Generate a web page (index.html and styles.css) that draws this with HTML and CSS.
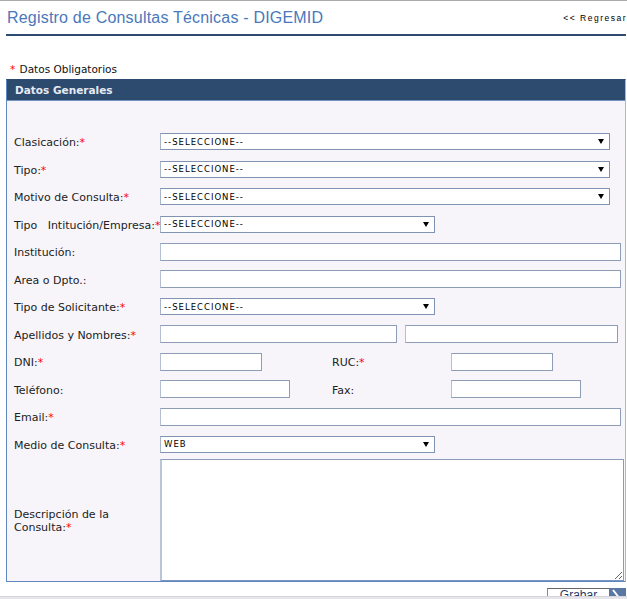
FILE: index.html
```html
<!DOCTYPE html>
<html lang="es">
<head>
<meta charset="utf-8">
<title>Registro de Consultas Técnicas - DIGEMID</title>
<link rel="stylesheet" href="styles.css">
</head>
<body>
<div class="topbar">
  <h1 class="title">Registro de Consultas Técnicas - DIGEMID</h1>
  <a class="back" href="#">&lt;&lt; Regresar</a>
</div>
<div class="note"><span class="star">*</span> Datos Obligatorios</div>
<form class="panel">
  <div class="panel-head">Datos Generales</div>
  <div class="panel-body">
    <div class="row">
      <label class="lbl">Clasicación:<span class="star">*</span></label>
      <span class="sel w-full"><select><option>--SELECCIONE--</option></select></span>
    </div>
    <div class="row">
      <label class="lbl">Tipo:<span class="star">*</span></label>
      <span class="sel w-full"><select><option>--SELECCIONE--</option></select></span>
    </div>
    <div class="row">
      <label class="lbl">Motivo de Consulta:<span class="star">*</span></label>
      <span class="sel w-full"><select><option>--SELECCIONE--</option></select></span>
    </div>
    <div class="row">
      <label class="lbl">Tipo&nbsp;&nbsp;&nbsp;Intitución/Empresa:<span class="star">*</span></label>
      <span class="sel w-half"><select><option>--SELECCIONE--</option></select></span>
    </div>
    <div class="row">
      <label class="lbl">Institución:</label>
      <input class="inp w-wide" type="text">
    </div>
    <div class="row">
      <label class="lbl">Area o Dpto.:</label>
      <input class="inp w-wide" type="text">
    </div>
    <div class="row">
      <label class="lbl">Tipo de Solicitante:<span class="star">*</span></label>
      <span class="sel w-half"><select><option>--SELECCIONE--</option></select></span>
    </div>
    <div class="row">
      <label class="lbl">Apellidos y Nombres:<span class="star">*</span></label>
      <input class="inp w-ape" type="text">
      <input class="inp w-nom" type="text">
    </div>
    <div class="row">
      <label class="lbl">DNI:<span class="star">*</span></label>
      <span class="cell"><input class="inp w-doc" type="text"></span>
      <label class="lbl2">RUC:<span class="star">*</span></label>
      <input class="inp w-doc" type="text">
    </div>
    <div class="row">
      <label class="lbl">Teléfono:</label>
      <span class="cell"><input class="inp w-tel" type="text"></span>
      <label class="lbl2">Fax:</label>
      <input class="inp w-tel" type="text">
    </div>
    <div class="row">
      <label class="lbl">Email:<span class="star">*</span></label>
      <input class="inp w-wide" type="text">
    </div>
    <div class="row">
      <label class="lbl">Medio de Consulta:<span class="star">*</span></label>
      <span class="sel w-half"><select><option>WEB</option></select></span>
    </div>
    <div class="row desc">
      <label class="lbl">Descripción de la Consulta:<span class="star">*</span></label>
      <textarea class="area"></textarea>
    </div>
  </div>
</form>
<div class="actions">
  <button class="btn" type="button">
    <span class="btn-text">Grabar</span>
    <span class="btn-icon"><svg width="17" height="12" viewBox="0 0 17 12"><line x1="4" y1="2" x2="9.5" y2="9" stroke="#fff" stroke-width="2"/></svg></span>
  </button>
</div>
<div class="strip"></div>
</body>
</html>
```
FILE: styles.css
```css
html { overflow: hidden; }
body {
  margin: 0;
  border-top: 1px solid #a9a9a9;
  background: #fff;
  font-family: "DejaVu Sans", Verdana, sans-serif;
  color: #222;
}
.topbar {
  margin: 0 1px 0 6px;
  height: 33px;
  border-bottom: 2px solid #2d4a70;
  display: flex;
  justify-content: space-between;
  align-items: flex-start;
}
.title {
  margin: 9px 0 0 1px;
  font: normal 16px/16px "Liberation Sans", Arial, sans-serif;
  letter-spacing: 0.2px;
  color: #4a78bb;
}
.back {
  margin: 12px -1px 0 0;
  font: 8.5px/10px "Liberation Sans", Arial, sans-serif;
  letter-spacing: 1.5px;
  color: #000;
  text-decoration: none;
}
.note {
  margin: 27px 0 0 10px;
  height: 13px;
  font-size: 10.5px;
  line-height: 13px;
  color: #111;
}
.note .star { margin-right: 1px; }
.star { color: #f00; }
.panel {
  display: block;
  margin: 3px 1px 0 6px;
  border: 1px solid #5f86bf;
  border-top-color: #2d4a6f;
  border-right-color: #a9b9d6;
  background: #f7f5fa;
}
.panel-head {
  height: 20px;
  line-height: 20px;
  padding-left: 8px;
  background: #2d4a6f;
  color: #e6ebf3;
  font-weight: bold;
  font-size: 10.5px;
  border-bottom: 1px solid #7393c2;
}
.panel-body {
  padding: 27px 0 0 7px;
}
.row {
  display: flex;
  align-items: center;
  height: 27.5px;
}
.lbl {
  width: 146px;
  flex: none;
  padding-top: 2px;
  font-size: 11px;
  line-height: 13px;
  color: #222;
}
.lbl2 {
  width: 119px;
  flex: none;
  padding-top: 2px;
  font-size: 11px;
  line-height: 13px;
  color: #222;
}
.cell { width: 172px; flex: none; }
.inp {
  display: block;
  box-sizing: border-box;
  height: 18px;
  margin: 0;
  padding: 0 3px;
  border: 1px solid #8d9db6;
  border-left-color: #b4c0d1;
  background: #fff;
  font: 11px "DejaVu Sans", sans-serif;
}
.w-wide { width: 461px; }
.w-ape { width: 237px; margin-right: 8px; }
.w-nom { width: 213px; }
.w-doc { width: 102px; }
.w-tel { width: 130px; }
.sel {
  position: relative;
  display: block;
  flex: none;
}
.sel select {
  display: block;
  box-sizing: border-box;
  width: 100%;
  height: 17px;
  margin: 0;
  padding: 0 0 0 3px;
  border: 1px solid #8093b0;
  border-left-color: #a9b6c9;
  border-radius: 0;
  background: #fff;
  color: #000;
  font: 8.5px "DejaVu Sans", sans-serif;
  letter-spacing: 1px;
  -webkit-appearance: none;
  appearance: none;
}
.sel::after {
  content: "";
  position: absolute;
  right: 6px;
  top: 6px;
  width: 0;
  height: 0;
  border-left: 3px solid transparent;
  border-right: 3px solid transparent;
  border-top: 5px solid #000;
}
.w-full { width: 450px; }
.w-half { width: 275px; }
.row.desc {
  height: auto;
  padding-top: 1px;
}
.area {
  display: block;
  box-sizing: border-box;
  width: 464px;
  height: 122px;
  margin: 0;
  border: 1px solid #8a9cb8;
  border-left: 2px solid #b9c4d4;
  border-bottom-color: #7a95bf;
  background: #fff;
}
.actions {
  display: flex;
  justify-content: flex-end;
  margin: 6px 1px 0 0;
}
.btn {
  display: flex;
  padding: 0;
  margin: 0;
  border: none;
  background: none;
  height: 20px;
}
.btn-text {
  box-sizing: border-box;
  width: 62px;
  height: 20px;
  border-top: 1px solid #666;
  border-left: 1px solid #888;
  background: #fff;
  font: 12px/13px "Liberation Sans", Arial, sans-serif;
  color: #1f3b66;
  text-align: center;
}
.btn-icon {
  display: block;
  width: 17px;
  height: 20px;
  background: #5878a3;
}
.btn-icon svg { display: block; }
.strip {
  position: fixed;
  left: 0;
  right: 0;
  bottom: 0;
  height: 2px;
  background: #e6e6ea;
  border-top: 1px solid #d4d4da;
}
```
